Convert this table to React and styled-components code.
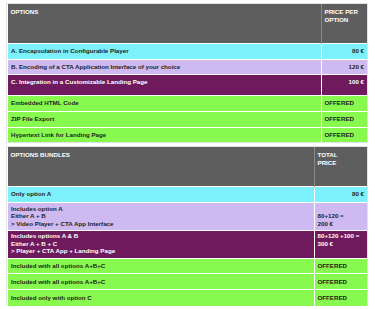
import styled, { createGlobalStyle } from "styled-components";

const GlobalStyle = createGlobalStyle`
  html, body {
    margin: 0;
    padding: 0;
    background: #ffffff;
  }
  body {
    font-family: "Liberation Sans", Arial, sans-serif;
  }
`;

const colors = {
  head: "#5e5e5e",
  cyan: "#7cf1fb",
  lavender: "#cebaf1",
  purple: "#6f1a5d",
  green: "#88f94f",
};

const Page = styled.div`
  display: flex;
  flex-direction: column;
  gap: 5px;
  padding: 4px 8px 0 7px;
`;

const Table = styled.table`
  width: 360px;
  border-collapse: collapse;
  table-layout: fixed;
  outline: 1px solid #e2e2e2;
  font-size: 6.2px;
  line-height: 7.5px;
  font-weight: 700;
`;

const Row = styled.tr`
  height: ${(p) => p.$h}px;
  background: ${(p) => colors[p.$tone]};
  color: ${(p) => (p.$tone === "head" || p.$tone === "purple" ? "#ffffff" : "#1e1e1e")};
`;

const Cell = styled.td`
  padding: ${(p) => p.$pad || "0 3px"};
  text-align: ${(p) => p.$align || "left"};
  vertical-align: ${(p) => p.$valign || "middle"};
  border-top: 1px solid rgba(255, 255, 255, 0.35);
  border-left: 1px solid rgba(255, 255, 255, 0.25);
  white-space: pre-line;
  overflow: hidden;
`;

const HeadCell = styled.th`
  padding: 4px 3px 0;
  text-align: left;
  vertical-align: top;
  font-weight: 700;
  white-space: pre-line;
  border-left: 1px solid #8a8a8a;
  &:first-child {
    border-left: none;
  }
`;

const options = [
  { tone: "cyan", h: 16, label: "A. Encapsulation in Configurable Player", price: "80 €", right: true },
  { tone: "lavender", h: 15, label: "B. Encoding of a CTA Application Interface of your choice", price: "120 €", right: true },
  { tone: "purple", h: 21, label: "C. Integration in a Customizable Landing Page", price: "100 €", right: true, pad: "0 3px 5px" },
  { tone: "green", h: 16, label: "Embedded HTML Code", price: "OFFERED" },
  { tone: "green", h: 16, label: "ZIP File Export", price: "OFFERED" },
  { tone: "green", h: 15, label: "Hypertext Link for Landing Page", price: "OFFERED" },
];

const bundles = [
  { tone: "cyan", h: 16, label: "Only option A", price: "80 €", right: true },
  {
    tone: "lavender",
    h: 28,
    label: "Includes option A\nEither A + B\n> Video Player + CTA App Interface",
    price: "80+120 =\n200 €",
    valign: "bottom",
    pad: "2px 3px 3px",
  },
  {
    tone: "purple",
    h: 28,
    label: "Includes options A & B\nEither A + B + C\n> Player + CTA App + Landing Page",
    price: "80+120 +100 =\n300 €",
    valign: "top",
    pad: "1px 3px 3px",
  },
  { tone: "green", h: 15, label: "Included with all options A+B+C", price: "OFFERED" },
  { tone: "green", h: 16, label: "Included with all options A+B+C", price: "OFFERED" },
  { tone: "green", h: 16, label: "Included only with option C", price: "OFFERED" },
];

const PriceTable = ({ title, priceTitle, priceWidth, rows }) => (
  <Table>
    <colgroup>
      <col />
      <col style={{ width: priceWidth }} />
    </colgroup>
    <thead>
      <Row $tone="head" $h={39}>
        <HeadCell>{title}</HeadCell>
        <HeadCell>{priceTitle}</HeadCell>
      </Row>
    </thead>
    <tbody>
      {rows.map((row, index) => (
        <Row key={index} $tone={row.tone} $h={row.h}>
          <Cell $pad={row.pad} $valign={row.valign === "bottom" ? "middle" : row.valign}>
            {row.label}
          </Cell>
          <Cell $pad={row.pad} $align={row.right ? "right" : "left"} $valign={row.valign}>
            {row.price}
          </Cell>
        </Row>
      ))}
    </tbody>
  </Table>
);

const App = () => (
  <>
    <GlobalStyle />
    <Page>
      <PriceTable title="OPTIONS" priceTitle={"PRICE PER\nOPTION"} priceWidth="46px" rows={options} />
      <PriceTable title="OPTIONS BUNDLES" priceTitle={"TOTAL\nPRICE"} priceWidth="53px" rows={bundles} />
    </Page>
  </>
);

export default App;
